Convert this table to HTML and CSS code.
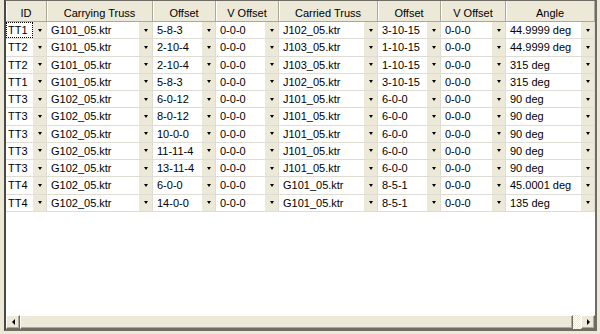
FILE: index.html
```html
<!DOCTYPE html>
<html lang="en">
<head>
    <meta charset="UTF-8">
    <title>Truss Connections</title>
    <link rel="stylesheet" href="styles.css">
</head>
<body>
    <div class="frame">
        <div class="view">
            <div class="grid-head">
                <div class="hcell">ID</div>
                <div class="hcell">Carrying Truss</div>
                <div class="hcell">Offset</div>
                <div class="hcell">V Offset</div>
                <div class="hcell">Carried Truss</div>
                <div class="hcell">Offset</div>
                <div class="hcell">V Offset</div>
                <div class="hcell">Angle</div>
            </div>
            <div id="rows"></div>
        </div>
        <div class="hscroll">
            <div class="sb-btn"><span class="arrow-left"></span></div>
            <div class="sb-thumb"></div>
            <div class="sb-track"></div>
            <div class="sb-btn"><span class="arrow-right"></span></div>
        </div>
    </div>

    <script>
        // id, carrying, offset, v offset, carried, offset, v offset, angle
        const data = [
            ['TT1', 'G101_05.ktr', '5-8-3', '0-0-0', 'J102_05.ktr', '3-10-15', '0-0-0', '44.9999 deg'],
            ['TT2', 'G101_05.ktr', '2-10-4', '0-0-0', 'J103_05.ktr', '1-10-15', '0-0-0', '44.9999 deg'],
            ['TT2', 'G101_05.ktr', '2-10-4', '0-0-0', 'J103_05.ktr', '1-10-15', '0-0-0', '315 deg'],
            ['TT1', 'G101_05.ktr', '5-8-3', '0-0-0', 'J102_05.ktr', '3-10-15', '0-0-0', '315 deg'],
            ['TT3', 'G102_05.ktr', '6-0-12', '0-0-0', 'J101_05.ktr', '6-0-0', '0-0-0', '90 deg'],
            ['TT3', 'G102_05.ktr', '8-0-12', '0-0-0', 'J101_05.ktr', '6-0-0', '0-0-0', '90 deg'],
            ['TT3', 'G102_05.ktr', '10-0-0', '0-0-0', 'J101_05.ktr', '6-0-0', '0-0-0', '90 deg'],
            ['TT3', 'G102_05.ktr', '11-11-4', '0-0-0', 'J101_05.ktr', '6-0-0', '0-0-0', '90 deg'],
            ['TT3', 'G102_05.ktr', '13-11-4', '0-0-0', 'J101_05.ktr', '6-0-0', '0-0-0', '90 deg'],
            ['TT4', 'G102_05.ktr', '6-0-0', '0-0-0', 'G101_05.ktr', '8-5-1', '0-0-0', '45.0001 deg'],
            ['TT4', 'G102_05.ktr', '14-0-0', '0-0-0', 'G101_05.ktr', '8-5-1', '0-0-0', '135 deg']
        ];

        let html = '';
        data.forEach((row, r) => {
            html += '<div class="grid-row">';
            row.forEach((val, c) => {
                const focus = (r === 0 && c === 0) ? ' focus' : '';
                html += `<div class="cell"><span class="val${focus}">${val}</span><span class="drop"></span></div>`;
            });
            html += '</div>';
        });
        document.getElementById('rows').innerHTML = html;
    </script>
</body>
</html>
```

FILE: styles.css
```css
/* Base */
*{margin:0;padding:0;box-sizing:border-box}
body{background:#ECE9D8;font-family:'Liberation Sans',Arial,sans-serif;font-size:11px;color:#000;overflow:hidden}
/* Sunken frame around the grid */
.frame{width:593px;height:332px;margin:-1px 0 0 4px;border:2px solid #6F6D63;border-left-color:#4A4943;display:flex;flex-direction:column}
.view{flex:1;background:#fff;overflow:hidden}
/* Shared column layout */
.grid-head,.grid-row{display:grid;grid-template-columns:41px 106px 63px 63px 99px 63px 65px 89px}
/* Header */
.grid-head{height:21px}
.hcell{background:#ECE9D8;border-right:1px solid #ACA899;border-bottom:1px solid #ACA899;box-shadow:inset 1px 0 #fff;text-align:center;padding-top:4px;line-height:16px;white-space:nowrap;overflow:hidden}
/* Rows */
.grid-row{height:calc(190px / 11)}
.cell{display:flex;border-right:1px solid #DEDCD3;border-bottom:1px solid #DEDCD3;overflow:hidden}
.val{flex:1;padding-left:4px;line-height:16px;white-space:nowrap;overflow:hidden}
.cell:first-child .val{padding-left:2px}
.val.focus{outline:1px dotted #000;outline-offset:-1px}
.drop{width:13px;background:#ECE9D8;display:flex;align-items:center;justify-content:center}
.drop::after{content:'';border-left:2px solid transparent;border-right:2px solid transparent;border-top:3px solid #000}
/* Horizontal scrollbar */
.hscroll{height:14px;display:flex}
.sb-btn,.sb-thumb{background:#ECE9D8;border:1px solid;border-color:#fff #716F64 #716F64 #fff;box-shadow:inset -1px -1px #ACA899}
.sb-btn{width:14px;display:flex;align-items:center;justify-content:center}
.sb-thumb{flex:1}
.sb-track{width:8px;background:repeating-conic-gradient(#fff 0 25%,#ECE9D8 0 50%) 0 0/2px 2px}
.arrow-left{border-top:3px solid transparent;border-bottom:3px solid transparent;border-right:3px solid #000}
.arrow-right{border-top:3px solid transparent;border-bottom:3px solid transparent;border-left:3px solid #000}
```
